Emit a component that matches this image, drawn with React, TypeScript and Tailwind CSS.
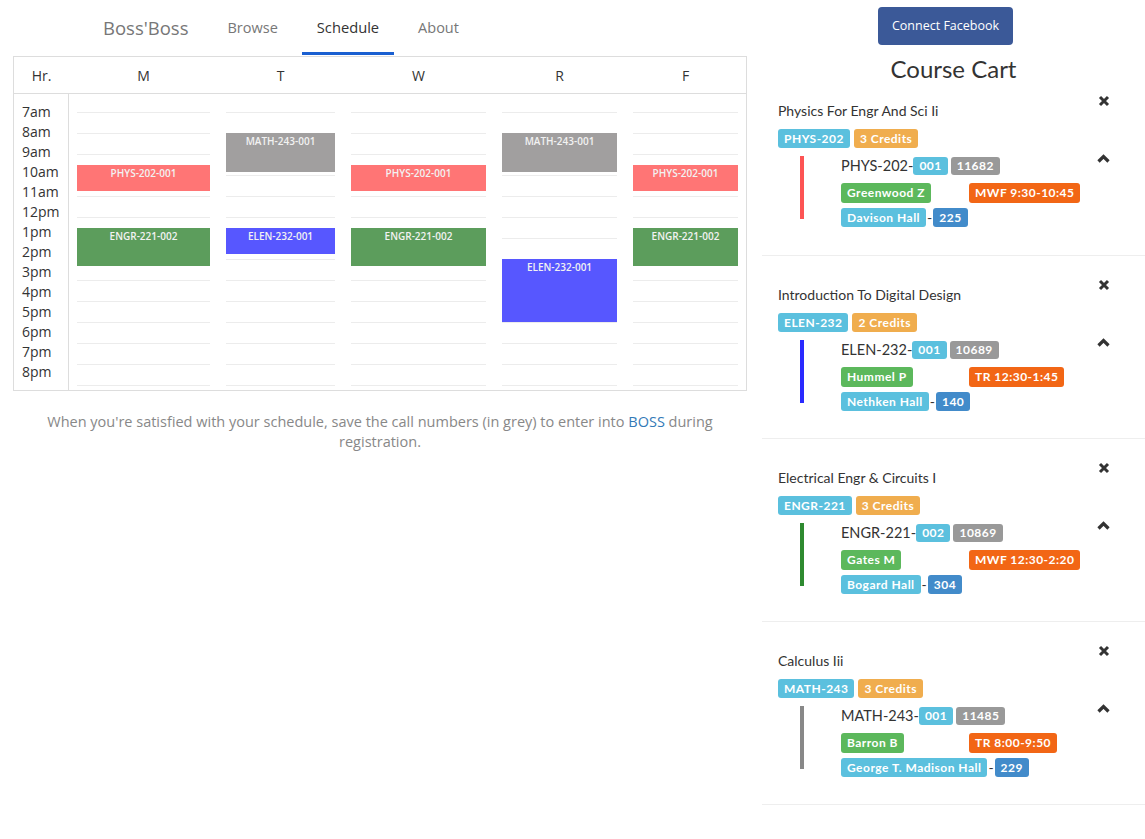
import React from 'react';

interface CalEvent {
    label: string;
    start: number;
    end: number;
    color: string;
}

interface DayCol {
    name: string;
    events: CalEvent[];
}

interface Course {
    title: string;
    code: string;
    credits: string;
    section: string;
    call: string;
    prof: string;
    time: string;
    hall: string;
    room: string;
    bar: string;
}

const PHYS = { label: 'PHYS-202-001', start: 9.5, end: 10.75, color: 'bg-[#ff7575]' };
const MATH = { label: 'MATH-243-001', start: 8, end: 9 + 50 / 60, color: 'bg-[#a19f9f]' };
const ENGR = { label: 'ENGR-221-002', start: 12.5, end: 14 + 20 / 60, color: 'bg-[#5c9d5c]' };

const days: DayCol[] = [
    { name: 'M', events: [PHYS, ENGR] },
    { name: 'T', events: [MATH, { label: 'ELEN-232-001', start: 12.5, end: 13.75, color: 'bg-[#5757ff]' }] },
    { name: 'W', events: [PHYS, ENGR] },
    { name: 'R', events: [MATH, { label: 'ELEN-232-001', start: 14, end: 17, color: 'bg-[#5757ff]' }] },
    { name: 'F', events: [PHYS, ENGR] },
];

const hours = ['7am', '8am', '9am', '10am', '11am', '12pm', '1pm', '2pm', '3pm', '4pm', '5pm', '6pm', '7pm', '8pm'];

const courses: Course[] = [
    { title: 'Physics For Engr And Sci Ii', code: 'PHYS-202', credits: '3 Credits', section: '001', call: '11682', prof: 'Greenwood Z', time: 'MWF 9:30-10:45', hall: 'Davison Hall', room: '225', bar: 'bg-[#fd5454]' },
    { title: 'Introduction To Digital Design', code: 'ELEN-232', credits: '2 Credits', section: '001', call: '10689', prof: 'Hummel P', time: 'TR 12:30-1:45', hall: 'Nethken Hall', room: '140', bar: 'bg-[#2a2aff]' },
    { title: 'Electrical Engr & Circuits I', code: 'ENGR-221', credits: '3 Credits', section: '002', call: '10869', prof: 'Gates M', time: 'MWF 12:30-2:20', hall: 'Bogard Hall', room: '304', bar: 'bg-[#2e8a30]' },
    { title: 'Calculus Iii', code: 'MATH-243', credits: '3 Credits', section: '001', call: '11485', prof: 'Barron B', time: 'TR 8:00-9:50', hall: 'George T. Madison Hall', room: '229', bar: 'bg-[#888888]' },
];

const HOUR = 21;

function Label({ children, color, h = 'h-[19px]', extra = '' }: { children: React.ReactNode; color: string; h?: string; extra?: string }) {
    return (
        <span className={`inline-flex items-center ${h} px-[6px] rounded-[3px] text-white font-bold text-[12px] tracking-[0.04em] leading-none ${color} ${extra}`}>
            {children}
        </span>
    );
}

function RemoveIcon() {
    return (
        <svg width="12" height="12" viewBox="0 0 12 12" className="text-[#333]">
            <path d="M2 2 L10 10 M10 2 L2 10" stroke="currentColor" strokeWidth="3" />
        </svg>
    );
}

function ChevronUpIcon() {
    return (
        <svg width="13" height="9" viewBox="0 0 13 9" className="text-[#333]">
            <path d="M1.5 7.5 L6.5 2.5 L11.5 7.5" stroke="currentColor" strokeWidth="3.2" fill="none" />
        </svg>
    );
}

function Calendar() {
    return (
        <div className="ml-[13px] w-[734px] border border-[#ddd] font-['Open_Sans',sans-serif] text-[14px] text-[#333]">
            <div className="grid grid-cols-[55px_149px_125px_151px_131px_121px] h-[37px] border-b border-[#ddd] items-center text-center">
                <div>Hr.</div>
                {days.map((d) => (
                    <div key={d.name}>{d.name}</div>
                ))}
            </div>
            <div className="grid grid-cols-[55px_149px_125px_151px_131px_121px] h-[296px]">
                <div className="border-r border-[#ddd] pt-[8px] pl-[8px]">
                    {hours.map((h) => (
                        <div key={h} className="h-[20px] leading-[20px]">{h}</div>
                    ))}
                </div>
                {days.map((d) => (
                    <div key={d.name} className="px-[8px] pt-[18px]">
                        <div className="relative">
                            {hours.slice(0, 13).map((h) => (
                                <div key={h} className="h-[21px] border-t border-[#ececec]" />
                            ))}
                            <div className="border-t border-[#ececec]" />
                            {d.events.map((ev) => (
                                <div
                                    key={ev.label}
                                    className={`absolute left-0 right-0 text-center text-[10px] leading-[16px] text-[#f2f2f2] font-semibold ${ev.color}`}
                                    style={{ top: (ev.start - 7) * HOUR, height: (ev.end - ev.start) * HOUR }}
                                >
                                    {ev.label}
                                </div>
                            ))}
                        </div>
                    </div>
                ))}
            </div>
        </div>
    );
}

function CourseCard({ c, first }: { c: Course; first: boolean }) {
    return (
        <div className={`flex h-[183px] ${first ? '' : 'border-t border-[#eee]'}`}>
            <div className="flex-1 pl-[16px] pt-[30px]">
                <div className="text-[14px] leading-[18px] text-[#333]">{c.title}</div>
                <div className="mt-[9px] flex gap-[4px]">
                    <Label color="bg-[#5bc0de]">{c.code}</Label>
                    <Label color="bg-[#f0ad4e]">{c.credits}</Label>
                </div>
                <div className="mt-[8px] flex">
                    <div className={`ml-[22px] w-[4px] h-[63px] ${c.bar}`} />
                    <div className="ml-[37px] w-[256px] pt-[1px]">
                        <div className="flex items-center h-[18px] text-[14.5px] text-[#333]">
                            <span>{c.code}-</span>
                            <Label color="bg-[#5bc0de]" h="h-[18px]">{c.section}</Label>
                            <Label color="bg-[#999]" h="h-[18px]" extra="ml-[3px]">{c.call}</Label>
                        </div>
                        <div className="mt-[8px] grid grid-cols-2 h-[20px]">
                            <div className="flex"><Label color="bg-[#5cb85c]" h="h-[20px]">{c.prof}</Label></div>
                            <div className="flex"><Label color="bg-[#f26615]" h="h-[20px]">{c.time}</Label></div>
                        </div>
                        <div className="mt-[5px] flex items-center h-[19px] text-[14px] text-[#333]">
                            <Label color="bg-[#5bc0de]">{c.hall}</Label>
                            <span className="px-[1px]">-</span>
                            <Label color="bg-[#428bca]">{c.room}</Label>
                        </div>
                    </div>
                </div>
            </div>
            <div className="w-[13px] mr-[35px] flex flex-col items-center">
                <div className="mt-[23px] flex"><RemoveIcon /></div>
                <div className="mt-[47px] flex"><ChevronUpIcon /></div>
            </div>
        </div>
    );
}

export default function App() {
    return (
        <div className="flex w-[1145px] min-h-[839px] bg-white">
            <div className="w-[762px]">
                <nav className="flex items-stretch h-[55px] pl-[88px] gap-[9px] font-['Open_Sans',sans-serif]">
                    <a className="flex items-center px-[15px] text-[18.5px] text-[#777]">Boss'Boss</a>
                    <a className="flex items-center px-[15px] text-[14.5px] text-[#777]">Browse</a>
                    <a className="flex items-center px-[15px] pt-[3px] text-[14.7px] text-[#333] border-b-[3px] border-[#1a5fd1]">Schedule</a>
                    <a className="flex items-center px-[15px] text-[14.5px] text-[#777]">About</a>
                </nav>
                <div className="mt-[1px]">
                    <Calendar />
                </div>
                <p className="ml-[13px] w-[734px] mt-[21px] text-center text-[14.5px] leading-[20px] text-[#888] font-['Open_Sans',sans-serif]">
                    <span>When you're satisfied with your schedule, save the call numbers (in grey) to enter into </span>
                    <a className="text-[#337ab7]">BOSS</a>
                    <span> during registration.</span>
                </p>
            </div>
            <div className="flex-1 font-['Lato',sans-serif]">
                <div className="flex justify-center pt-[7px] pr-[16px]">
                    <button className="h-[38px] px-[14px] rounded-[4px] bg-[#3b5998] text-white text-[12.5px] font-['Open_Sans',sans-serif]">
                        Connect Facebook
                    </button>
                </div>
                <h3 className="mt-[10px] -mb-[11px] text-center text-[24px] leading-[28px] text-[#333]">Course Cart</h3>
                <div className="border-b border-[#eee]">
                    {courses.map((c, i) => (
                        <CourseCard key={c.code} c={c} first={i === 0} />
                    ))}
                </div>
            </div>
        </div>
    );
}
